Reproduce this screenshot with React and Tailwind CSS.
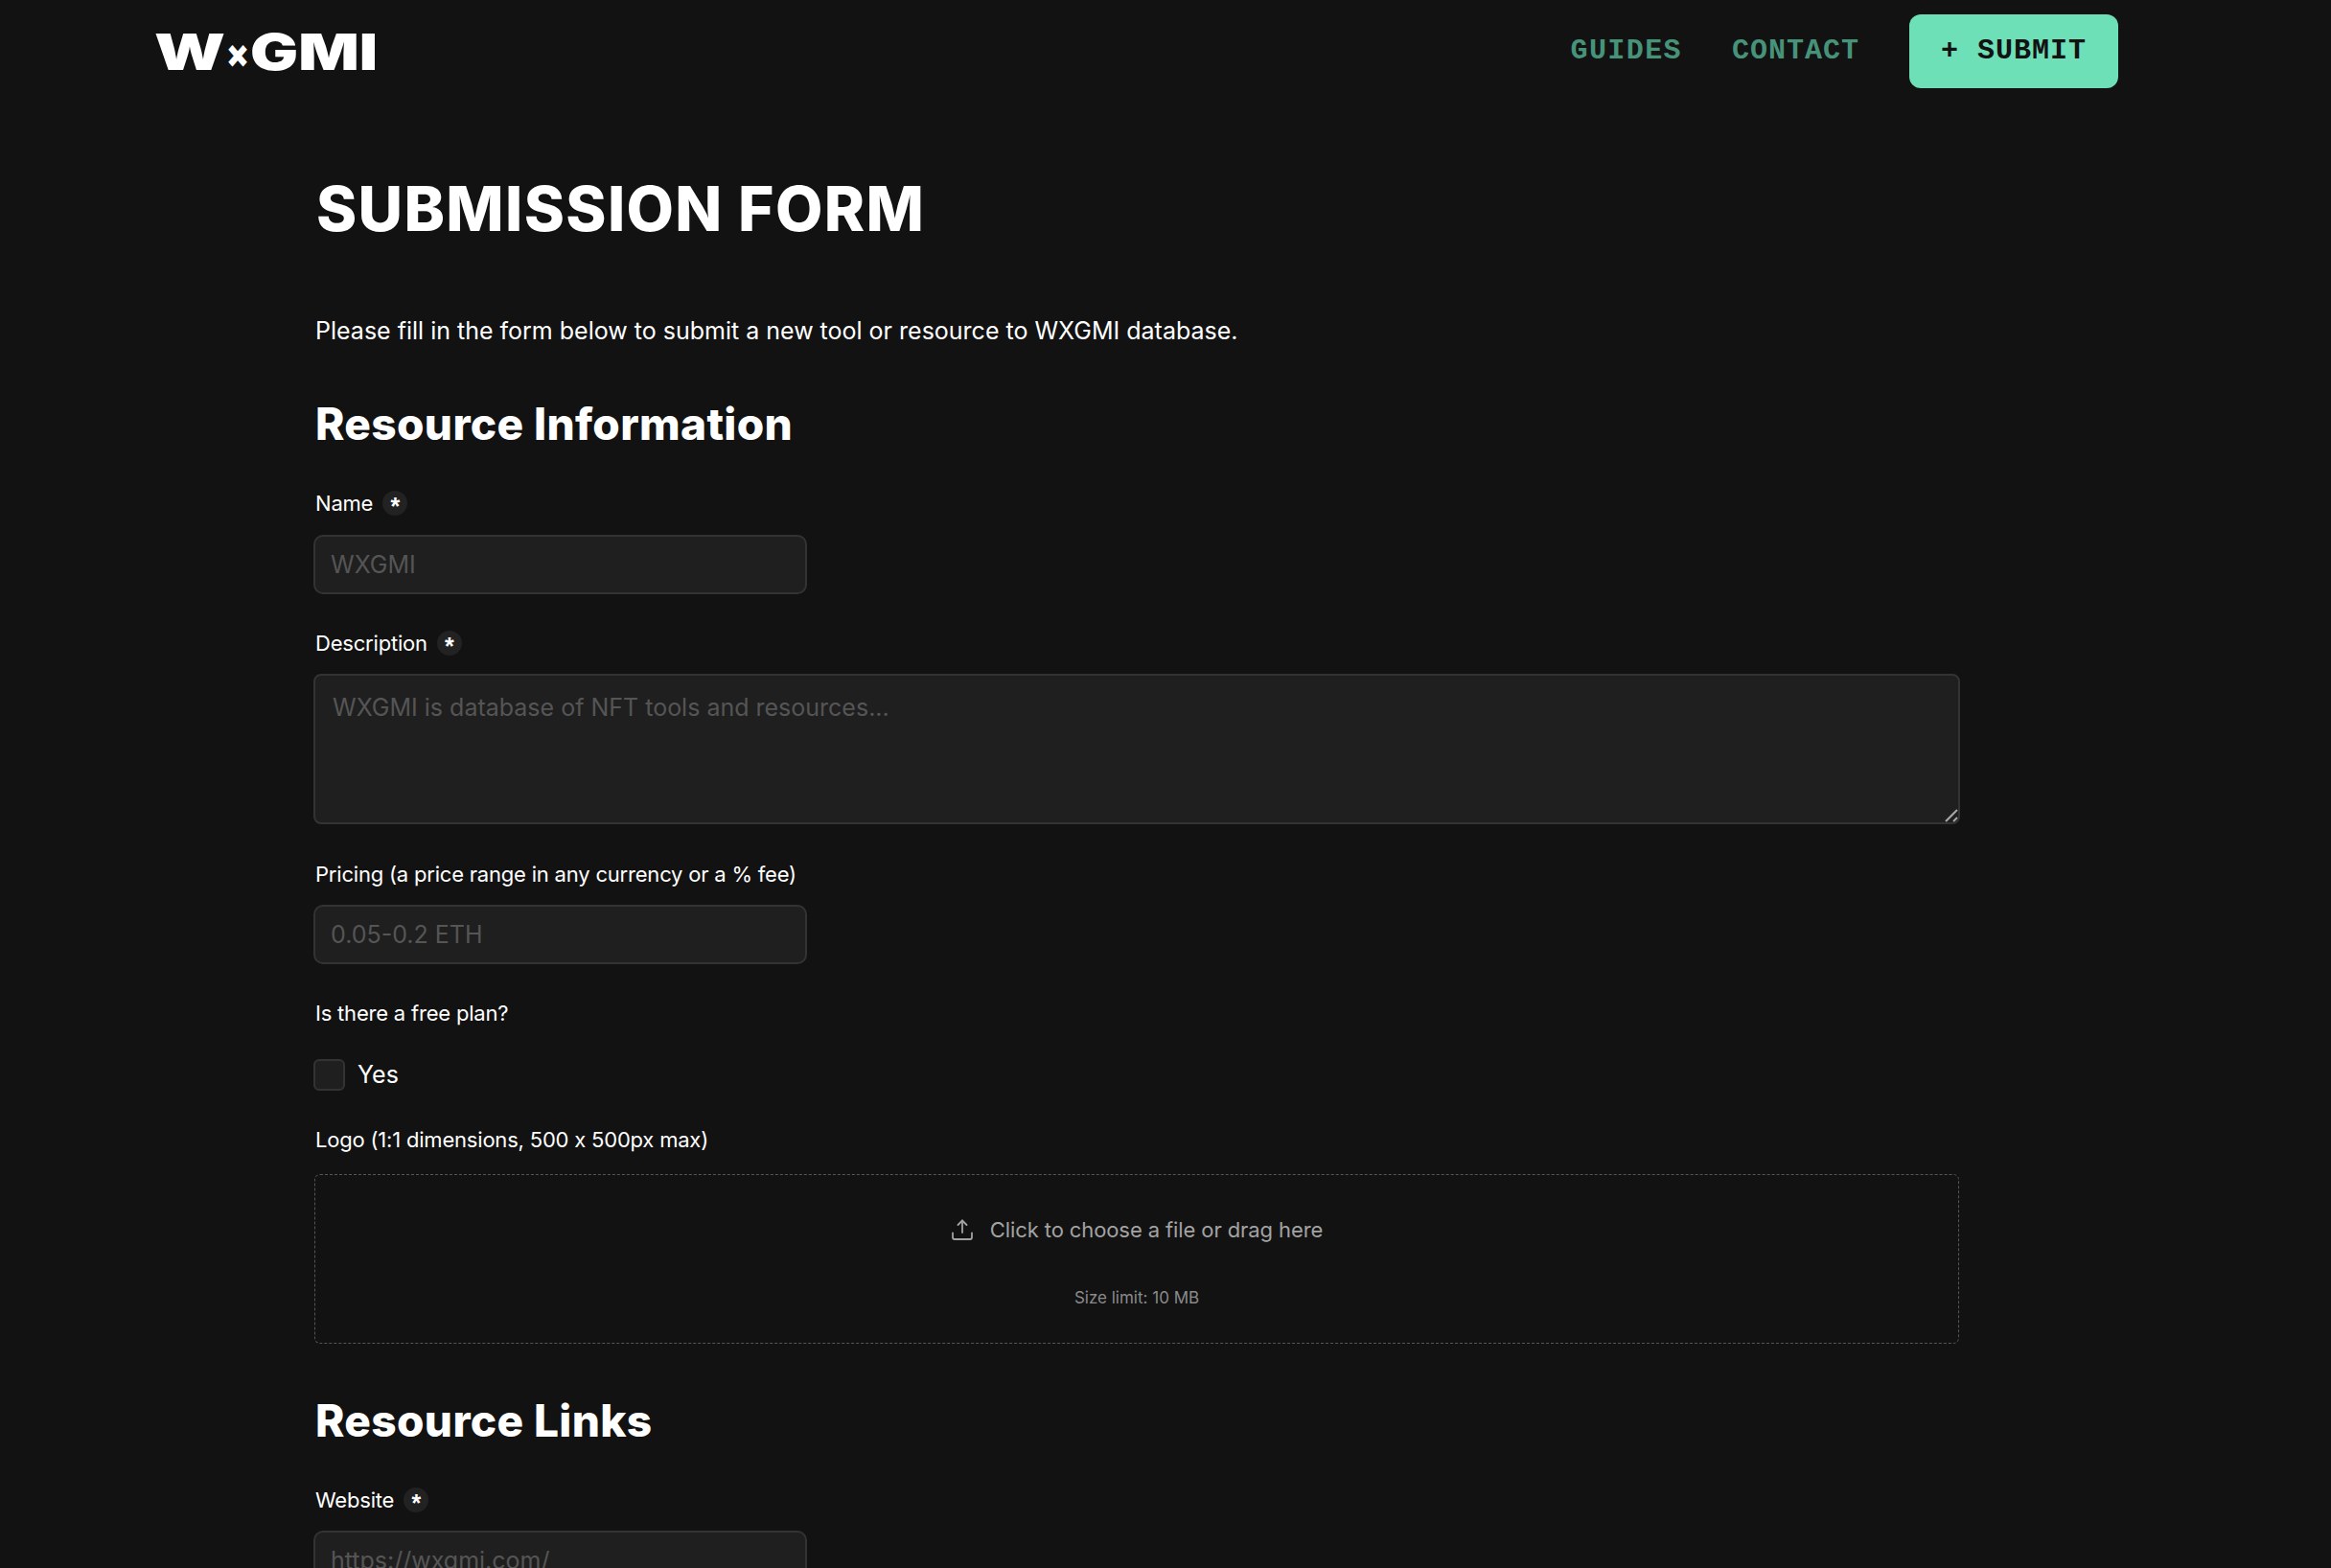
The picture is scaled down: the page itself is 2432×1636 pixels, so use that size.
const sans = "font-['Inter',sans-serif]";

function Req() {
  return (
    <span className="ml-[10px] flex h-[26px] w-[26px] items-center justify-center rounded-full bg-[#222222] font-['Liberation_Sans',sans-serif] text-[25px] font-bold leading-none text-white">
      <span className="mt-[7px]">*</span>
    </span>
  );
}

function Label({ children, req, className = "" }) {
  return (
    <div className={`flex h-[28px] items-center text-[22px] leading-[28px] tracking-[-0.2px] text-white ${className}`}>
      <span>{children}</span>
      {req ? <Req /> : null}
    </div>
  );
}

function Field({ placeholder, className = "" }) {
  return (
    <input
      placeholder={placeholder}
      className={`block h-[62px] w-[515px] rounded-[10px] border-2 border-[#333333] bg-[#1f1f1f] px-[16px] text-[25px] text-white outline-none placeholder:text-[#555555] ${className}`}
    />
  );
}

export default function App() {
  return (
    <div className={`h-[1636px] w-full overflow-hidden bg-[#121212] text-white ${sans}`}>
      <header className="flex h-[107px] items-center justify-between pl-[163px] pr-[222px]">
        <svg width="230" height="40" viewBox="0 0 230 40" className="block overflow-visible" fill="#ffffff" fontFamily="Inter" fontWeight="900">
          <text x="-2" y="39" textLength="74" lengthAdjust="spacingAndGlyphs" fontSize="52">W</text>
          <text x="73" y="36" textLength="24" lengthAdjust="spacingAndGlyphs" fontSize="40">×</text>
          <text x="98" y="39" textLength="133" lengthAdjust="spacingAndGlyphs" fontSize="52">GMI</text>
        </svg>
        <nav className="flex items-center font-['Liberation_Mono',monospace] font-bold">
          <a className="text-[30px] tracking-[1.4px] text-[#46937a]">GUIDES</a>
          <a className="ml-[52px] text-[30px] tracking-[1px] text-[#46937a]">CONTACT</a>
          <button className="ml-[52px] h-[77px] w-[218px] rounded-[12px] bg-[#6ee0b8] text-[30px] tracking-[1px] text-[#121212]">+ SUBMIT</button>
        </nav>
      </header>

      <main className="ml-[327px] w-[1718px]">
        <h1 className="mt-[79px] pl-[3px] text-[64px] font-extrabold leading-[64px] tracking-[1.35px]">SUBMISSION FORM</h1>
        <p className="mt-[78px] pl-[2px] text-[25px] leading-[34px]">Please fill in the form below to submit a new tool or resource to WXGMI database.</p>
        <h2 className="mt-[52px] pl-[2px] text-[46px] font-extrabold leading-[56px] tracking-[0.35px]">Resource Information</h2>

        <Label req className="mt-[41px] pl-[2px]">Name</Label>
        <Field placeholder="WXGMI" className="mt-[19px]" />

        <Label req className="mt-[37px] pl-[2px]">Description</Label>
        <div className="relative mt-[18px] h-[157px] w-[1718px]">
          <textarea
            placeholder="WXGMI is database of NFT tools and resources..."
            className="block h-full w-full resize-none rounded-[8px] border-2 border-[#333333] bg-[#1f1f1f] px-[18px] py-[16px] text-[25px] leading-[34px] text-white outline-none placeholder:text-[#555555]"
          />
          <svg width="16" height="16" viewBox="0 0 16 16" className="pointer-events-none absolute right-0 bottom-0" stroke="#a8a8a8" strokeWidth="2">
            <path d="M1 13 13 1" />
            <path d="M9 13 13 9" />
          </svg>
        </div>

        <Label className="mt-[38px] pl-[2px]">Pricing (a price range in any currency or a % fee)</Label>
        <Field placeholder="0.05-0.2 ETH" className="mt-[18px]" />

        <Label className="mt-[37px] pl-[2px]">Is there a free plan?</Label>
        <div className="mt-[34px] flex items-center">
          <span className="h-[33px] w-[33px] rounded-[6px] border-2 border-[#333333] bg-[#1f1f1f]" />
          <span className="ml-[13px] text-[25px] leading-[33px]">Yes</span>
        </div>

        <Label className="mt-[37px] pl-[2px]">Logo (1:1 dimensions, 500 x 500px max)</Label>
        <div className="mt-[22px] ml-[1px] flex h-[177px] w-[1716px] flex-col items-center rounded-[6px] border border-dashed border-[#555555]">
          <div className="mt-[43px] flex h-[28px] items-center text-[22px] leading-[28px] tracking-[-0.1px] text-[#a3a3a3]">
            <svg width="24" height="24" viewBox="0 0 24 24" fill="none" stroke="#a3a3a3" strokeWidth="1.8" strokeLinecap="round" strokeLinejoin="round" className="mr-[17px]">
              <path d="M12 15V2.500" />
              <path d="M7.500 7 12 2.500 16.500 7" />
              <path d="M2 15.500v4.500a2 2 0 0 0 2 2h16a2 2 0 0 0 2-2v-4.500" />
            </svg>
            <span>Click to choose a file or drag here</span>
          </div>
          <div className="mt-[45px] text-[17px] leading-[24px] text-[#8a8a8a]">Size limit: 10 MB</div>
        </div>

        <h2 className="mt-[52px] pl-[2px] text-[46px] font-extrabold leading-[56px] tracking-[0.35px]">Resource Links</h2>
        <Label req className="mt-[41px] pl-[2px]">Website</Label>
        <Field placeholder="https://wxgmi.com/" className="mt-[18px]" />
      </main>
    </div>
  );
}
